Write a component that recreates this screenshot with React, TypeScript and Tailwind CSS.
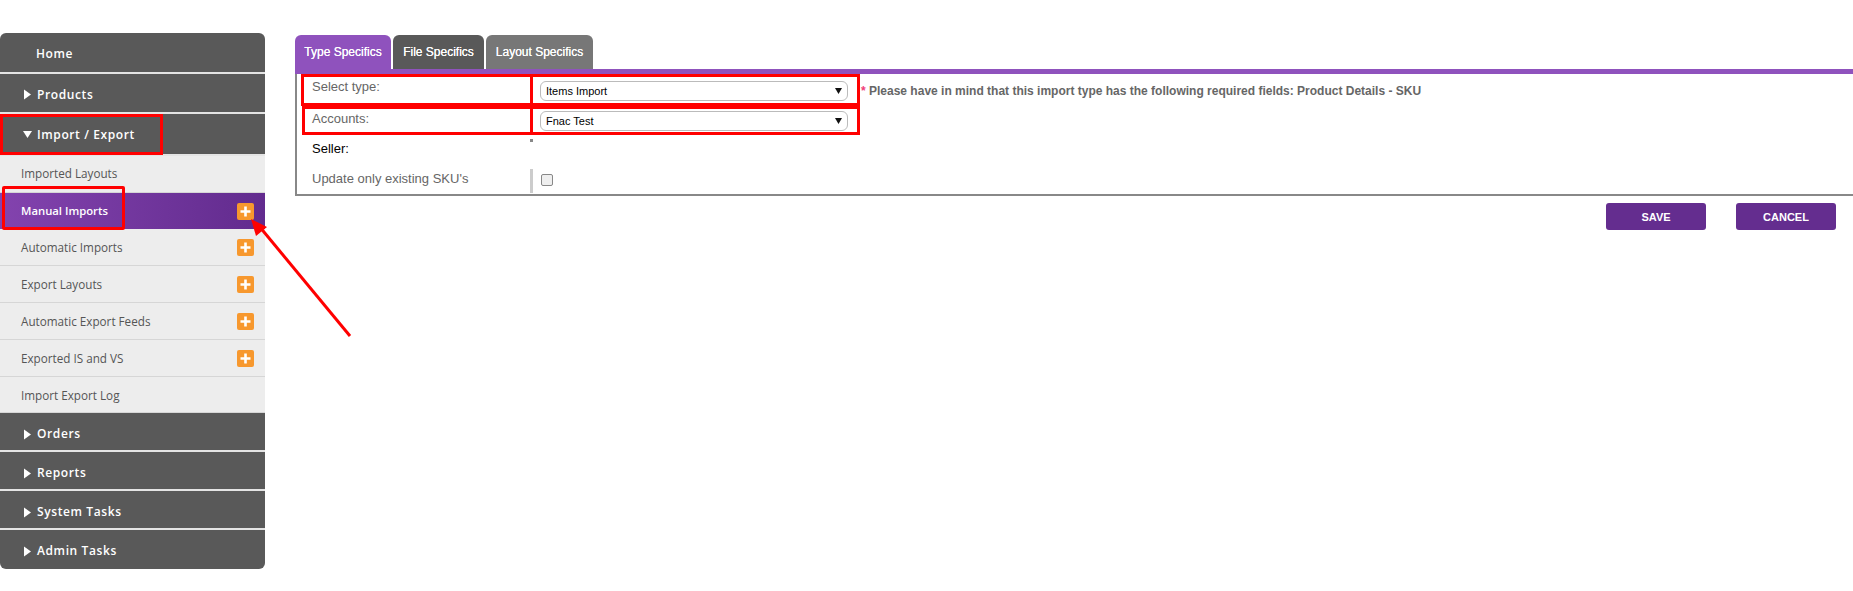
const sans = "font-['Open_Sans','Noto_Sans',sans-serif]";

function Tri({ down }: { down?: boolean }) {
  return (
    <svg width="9" height="11" viewBox="0 0 9 11" className="shrink-0">
      {down ? <polygon points="0,2 9,2 4.5,9" fill="#fff" /> : <polygon points="1,0.5 8,5.5 1,10.5" fill="#fff" />}
    </svg>
  );
}

function Head({ label, h, open, plain, pad = "pt-[3px]" }: { label: string; h: string; open?: boolean; plain?: boolean; pad?: string }) {
  return (
    <div className={`flex items-center bg-[#595959] border-b-2 border-[#e4e4e4] last:border-b-0 pl-[23px] gap-[5px] text-[12px] font-semibold tracking-[0.6px] text-white ${pad} ${h}`}>
      {plain ? <span className="w-[8px]" /> : <Tri down={open} />}
      <span>{label}</span>
    </div>
  );
}

function Plus() {
  return (
    <span className="flex h-[17px] w-[17px] items-center justify-center rounded-[2px] bg-[#f7982e]">
      <svg width="11" height="11" viewBox="0 0 11 11">
        <path d="M5.5 0.5v10M0.5 5.5h10" stroke="#fff" strokeWidth="2.6" />
      </svg>
    </span>
  );
}

function Sub({ label, plus, active, low, h = "h-[37px]" }: { label: string; plus?: boolean; active?: boolean; low?: boolean; h?: string }) {
  return (
    <div
      className={`flex items-center justify-between pl-[21px] pr-[11px] ${h} ${
        active
          ? "bg-gradient-to-r from-[#8343ae] to-[#622b8e] text-[11.3px] font-semibold text-white"
          : "border-b border-[#d6d6d6] bg-[#ededed] text-[11.7px] text-[#555] shadow-[0_1px_0_#fff]"
      }`}
    >
      <span className={low ? "mt-[2px]" : ""}>{label}</span>
      {plus && <Plus />}
    </div>
  );
}

function Row({ label, h, dark, labelClass, divider, children }: { label: string; h: string; dark?: boolean; labelClass?: string; divider?: string; children?: React.ReactNode }) {
  return (
    <div className={`flex ${h}`}>
      <div className={`w-[233px] pl-[15px] text-[13px] ${dark ? "text-black" : "text-[#666]"} ${labelClass ?? ""}`}>{label}</div>
      <div className={divider}>{children}</div>
    </div>
  );
}

function Select({ value }: { value: string }) {
  return (
    <div className="flex h-[20px] w-[308px] items-center justify-between rounded-[6px] border border-[#bbb] bg-white pl-[5px] pr-[5px] text-[11px] text-black">
      <span>{value}</span>
      <svg width="7" height="6" viewBox="0 0 7 6">
        <polygon points="0,0 7,0 3.5,6" fill="#111" />
      </svg>
    </div>
  );
}

export default function App() {
  return (
    <div className="relative h-[591px] w-[1853px] overflow-hidden bg-white font-['Liberation_Sans',Arial,sans-serif]">
      <div className="flex pt-[33px]">
        <aside className={`w-[265px] shrink-0 overflow-hidden rounded-[6px] ${sans}`}>
          <Head label="Home" h="h-[41px]" plain />
          <Head label="Products" h="h-[40px]" />
          <Head label="Import / Export" h="h-[42px]" open pad="pt-[1px]" />
          <Sub label="Imported Layouts" />
          <Sub label="Manual Imports" plus active h="h-[36px]" />
          <Sub label="Automatic Imports" plus low />
          <Sub label="Export Layouts" plus low />
          <Sub label="Automatic Export Feeds" plus low />
          <Sub label="Exported IS and VS" plus low />
          <Sub label="Import Export Log" low h="h-[36px]" />
          <Head label="Orders" h="h-[39px]" pad="pt-[5px]" />
          <Head label="Reports" h="h-[39px]" pad="pt-[5px]" />
          <Head label="System Tasks" h="h-[39px]" pad="pt-[5px]" />
          <Head label="Admin Tasks" h="h-[39px]" />
        </aside>

        <main className="ml-[30px] mt-[2px] min-w-0 flex-1">
          <div className="flex gap-[2px] text-[12px] text-white [text-shadow:0_0_0.6px_#fff]">
            <div className="flex h-[34px] w-[96px] items-center justify-center rounded-t-[6px] bg-[#8f52bd]">Type Specifics</div>
            <div className="flex h-[34px] w-[91px] items-center justify-center rounded-t-[6px] bg-[#595959]">File Specifics</div>
            <div className="flex h-[34px] w-[107px] items-center justify-center rounded-t-[6px] bg-[#777]">Layout Specifics</div>
          </div>
          <div className="h-[5px] bg-[#8f52bd]" />
          <div className="h-[122px] border-b-2 border-l-2 border-[#888] pt-[5px]">
            <Row label="Select type:" h="h-[30px]" labelClass="-mt-[2px]">
              <div className="flex items-start pl-[10px] pt-[2px]">
                <Select value="Items Import" />
                <p className="ml-[13px] mt-[1px] text-[12px] font-bold whitespace-nowrap text-[#666]">
                  <span className="text-[#f0407a]">*</span> Please have in mind that this import type has the following required fields: Product Details - SKU
                </p>
              </div>
            </Row>
            <Row label="Accounts:" h="h-[30px]">
              <div className="pl-[10px] pt-[2px]">
                <Select value="Fnac Test" />
              </div>
            </Row>
            <Row label="Seller:" h="h-[30px]" dark divider="h-[3px] w-[3px] bg-[#888]" />
            <Row label="Update only existing SKU's" h="h-[24px]" divider="h-[24px] border-l-[3px] border-[#ccc] pl-[8px] pt-[5px]">
              <div className="h-[12px] w-[12px] rounded-[2px] border border-[#888] bg-[#efefef]" />
            </Row>
          </div>
          <div className="mt-[7px] flex justify-end gap-[30px] pr-[17px] text-[11px] font-bold text-white">
            <div className="flex h-[27px] w-[100px] items-center justify-center rounded-[3px] bg-[#642d8f] pt-[1px]">SAVE</div>
            <div className="flex h-[27px] w-[100px] items-center justify-center rounded-[3px] bg-[#642d8f] pt-[1px]">CANCEL</div>
          </div>
        </main>
      </div>

      {/* annotations drawn over the screenshot */}
      <div className="absolute left-0 top-[114px] h-[41px] w-[163px] border-[3px] border-[#f00]" />
      <div className="absolute left-[2px] top-[186px] h-[44px] w-[123px] rounded-[2px] border-[3px] border-[#f00]" />
      <div className="absolute left-[301px] top-[74px] h-[32px] w-[559px] border-[3px] border-[#f00]" />
      <div className="absolute left-[302px] top-[106px] h-[29px] w-[558px] border-[3px] border-[#f00]" />
      <div className="absolute left-[530px] top-[74px] h-[61px] w-[3px] bg-[#f00]" />
      <svg className="absolute left-[245px] top-[215px]" width="110" height="125" viewBox="0 0 110 125">
        <path d="M105 121 L14 11" stroke="#f00" strokeWidth="3" fill="none" />
        <polygon points="6,4 22,12 11,21" fill="#f00" />
      </svg>
    </div>
  );
}
